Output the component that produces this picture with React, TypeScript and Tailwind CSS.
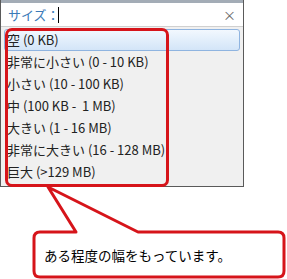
import React from "react"

const sizes = [
  "非常に小さい (0 - 10 KB)",
  "小さい (10 - 100 KB)",
  "中 (100 KB -  1 MB)",
  "大きい (1 - 16 MB)",
  "非常に大きい (16 - 128 MB)",
  "巨大 (>129 MB)",
]

const font = { fontFamily: '"Noto Sans CJK JP", "Noto Sans", sans-serif' }

export default function App() {
  return (
    <div className="relative w-[287px] h-[279px] bg-white overflow-hidden" style={font}>
      {/* Search dropdown */}
      <div className="w-[244px] bg-[#f0f0f0] border-x border-b border-[#5a5a5a]">
        <div className="h-[3px] bg-[#a3acb6]" />
        <div className="h-[24px] bg-white border-b border-[#d0d0d0] flex items-center justify-between pl-[7px] pr-[7px]">
          <div className="flex items-center text-[13px] text-[#3a7ab8]">
            <span>サイズ：</span>
            <span className="w-px h-[16px] bg-black -ml-[2px]" />
          </div>
          <span className="text-[13px] text-[#666]">×</span>
        </div>
        <div className="pt-[2px] pb-[3px] px-[3px] text-[13px] text-[#222] whitespace-pre">
          <div className="h-[22px] flex items-center px-[2px] rounded-[3px] border border-[#8fb4e0] bg-gradient-to-b from-[#f2f8fe] to-[#d3e5f8]">
            空 (0 KB)
          </div>
          {sizes.map((s) => (
            <div key={s} className="h-[22px] flex items-center px-[3px]">
              {s}
            </div>
          ))}
        </div>
      </div>

      {/* Annotation: red frame around list */}
      <div className="absolute left-[5px] top-[28px] w-[164px] h-[159px] border-[3px] border-[#d6141a] rounded-[7px]" />

      {/* Callout bubble */}
      <svg className="absolute left-0 top-0" width="287" height="279" viewBox="0 0 287 279">
        <path
          d="M40 232 L76 232 L48 187 L138 232 L278 232 Q284 232 284 238 L284 271 Q284 277 278 277 L40 277 Q34 277 34 271 L34 238 Q34 232 40 232 Z"
          fill="#fff"
          stroke="#d6141a"
          strokeWidth="3"
          strokeLinejoin="round"
        />
      </svg>
      <div className="absolute left-[44px] top-[245px] text-[13.5px] text-black">
        ある程度の幅をもっています。
      </div>
    </div>
  )
}
